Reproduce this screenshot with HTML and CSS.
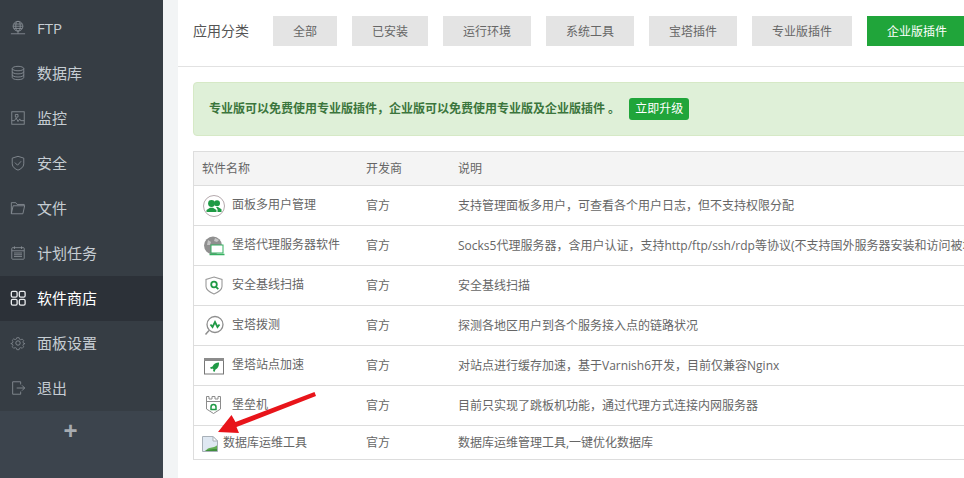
FILE: index.html
```html
<!DOCTYPE html>
<html lang="zh-CN">
<head>
<meta charset="utf-8">
<title>软件商店</title>
<link rel="stylesheet" href="styles.css">
</head>
<body>
<div class="page">
  <aside class="sidebar">
    <nav class="menu">
      <a class="menu-item"><svg class="mi" viewBox="0 0 18 18"><circle cx="9" cy="7" r="5.5"/><ellipse cx="9" cy="7" rx="2.500" ry="5.500"/><path d="M3.500 7h11M4.500 4.500h9M4.500 9.500h9M1 15.500h16M9 12.500v3"/></svg><span>FTP</span></a>
      <a class="menu-item"><svg class="mi" viewBox="0 0 18 18"><ellipse cx="9" cy="4" rx="6.500" ry="2.500"/><path d="M2.500 4v10c0 1.400 2.900 2.500 6.500 2.500s6.500-1.100 6.500-2.500V4M2.500 7.500C2.500 8.900 5.400 10 9 10s6.500-1.100 6.500-2.500M2.500 11c0 1.400 2.900 2.500 6.500 2.500s6.500-1.100 6.500-2.500"/></svg><span>数据库</span></a>
      <a class="menu-item"><svg class="mi" viewBox="0 0 18 18"><rect x="2" y="2" width="14" height="14"/><path d="M2 12h3l2-3 2 4 2-3 1 2h4M6 5h3v3H6z"/></svg><span>监控</span></a>
      <a class="menu-item"><svg class="mi" viewBox="0 0 18 18"><path d="M9 1.500l6.500 2v6.500c0 3.500-3.500 6-6.500 7-3-1-6.500-3.500-6.500-7V3.500z"/><path d="M5.500 8.500l3 3 4-4.500"/></svg><span>安全</span></a>
      <a class="menu-item"><svg class="mi" viewBox="0 0 18 18"><path d="M1.500 15.500V3h5l1.500 2h8v1.500M1.500 15.500h13l2-9H3.500z"/></svg><span>文件</span></a>
      <a class="menu-item"><svg class="mi" viewBox="0 0 18 18"><rect x="2" y="3" width="14" height="13" rx="1"/><path d="M2 6.500h14M5 1.500v3M13 1.500v3M4.500 9h9M4.500 11h9M4.500 13h9"/></svg><span>计划任务</span></a>
      <a class="menu-item active"><svg class="mi" viewBox="0 0 18 18"><rect x="1.500" y="1.500" width="6.500" height="6.500" rx="1.500"/><rect x="10.500" y="1.500" width="6.500" height="6.500" rx="1.500"/><rect x="1.500" y="10.500" width="6.500" height="6.500" rx="1.500"/><rect x="10.500" y="10.500" width="6.500" height="6.500" rx="1.500"/></svg><span>软件商店</span></a>
      <a class="menu-item"><svg class="mi" viewBox="0 0 18 18"><circle cx="9" cy="9" r="2.500"/><path d="M7.500 2h3l.5 2 1.800.8 1.800-1 2 2-1 1.800.8 1.800 2 .5v0l-2 .6-.8 1.800 1 1.800-2 2-1.800-1-1.800.8-.5 2h-3l-.5-2-1.800-.8-1.800 1-2-2 1-1.800-.8-1.800-2-.6v-.2l2-.5.8-1.800-1-1.800 2-2 1.800 1 1.800-.8z" transform="translate(1.300 1.300) scale(.85)"/></svg><span>面板设置</span></a>
      <a class="menu-item"><svg class="mi" viewBox="0 0 18 18"><path d="M12 5V2H3v14h9v-3M7.500 9h9M13.500 6l3 3-3 3"/></svg><span>退出</span></a>
    </nav>
    <div class="add">+</div>
  </aside>
  <main class="main">
    <div class="card">
      <div class="filter">
        <span class="filter-label">应用分类</span>
        <a class="tab">全部</a>
        <a class="tab">已安装</a>
        <a class="tab">运行环境</a>
        <a class="tab">系统工具</a>
        <a class="tab">宝塔插件</a>
        <a class="tab">专业版插件</a>
        <a class="tab on">企业版插件</a>
      </div>
      <div class="body">
        <div class="alert">
          <span>专业版可以免费使用专业版插件，企业版可以免费使用专业版及企业版插件 。</span>
          <a class="upgrade">立即升级</a>
        </div>
        <div class="table">
          <div class="row head"><div>软件名称</div><div>开发商</div><div>说明</div></div>
          <div class="row">
            <div class="name"><svg class="ico" viewBox="0 0 24 24"><circle cx="12" cy="12" r="10.500" fill="#fff" stroke="#b5a9ad"/><g fill="#1f9a45"><circle cx="9.500" cy="9.500" r="3.400"/><path d="M4.500 18v-2l3.500-2.200h3L14.500 16v2z"/><circle cx="15" cy="9.300" r="3"/><path d="M14 13h2l3.500 2.300V18h-4v-2.700z"/></g></svg><span>面板多用户管理</span></div>
            <div>官方</div><div>支持管理面板多用户，可查看各个用户日志，但不支持权限分配</div>
          </div>
          <div class="row">
            <div class="name"><svg class="ico" viewBox="0 0 24 24"><circle cx="11" cy="11.500" r="9" fill="#8f8f8f"/><path d="M6 6l3 2-1 3-3 0zM13 4l4 2-2 2-3-1z" fill="#c4c4c4"/><rect x="9" y="11" width="12" height="8" fill="#fff" stroke="#35b060"/><path d="M7.500 20.500h15" stroke="#35b060" stroke-width="1.500"/></svg><span>堡塔代理服务器软件</span></div>
            <div>官方</div><div>Socks5代理服务器，含用户认证，支持http/ftp/ssh/rdp等协议(不支持国外服务器安装和访问被墙网站)</div>
          </div>
          <div class="row">
            <div class="name"><svg class="ico" viewBox="0 0 24 24"><path d="M11 3.500l8 2.500v7c0 3.500-4.500 6-8 7.500-3.500-1.500-8-4-8-7.500V6z" fill="#fff" stroke="#9a9a9a" stroke-width="1.100" transform="translate(1 -.5)"/><circle cx="12" cy="10.500" r="2.800" fill="none" stroke="#1f9a45" stroke-width="1.800"/><path d="M14 12.800l2.300 2.300" stroke="#1f9a45" stroke-width="1.800"/></svg><span>安全基线扫描</span></div>
            <div>官方</div><div>安全基线扫描</div>
          </div>
          <div class="row">
            <div class="name"><svg class="ico" viewBox="0 0 24 24"><circle cx="13" cy="10.500" r="8" fill="#fff" stroke="#8e8e8e" stroke-width="1.300"/><path d="M7 16.500L3.500 20.500" stroke="#8e8e8e" stroke-width="1.500"/><path d="M8.500 10.500l2 2.500 2.500-5 2.500 5 2-2.500" fill="none" stroke="#1f9a45" stroke-width="1.800"/></svg><span>宝塔拨测</span></div>
            <div>官方</div><div>探测各地区用户到各个服务接入点的链路状况</div>
          </div>
          <div class="row">
            <div class="name"><svg class="ico" viewBox="0 0 24 24"><rect x="2.500" y="4.500" width="19" height="15.500" fill="#fff" stroke="#777"/><rect x="2" y="4" width="20" height="3" fill="#8c8c8c"/><path d="M17 8.500c-3 0-5.500 1.500-6.500 4l-2.500 1 1 1.500 1.500-.5 1 1-.5 1.500 1.500 1 1-2.500c2.500-1 3.500-3.500 3.500-6z" fill="#1f9a45"/></svg><span>堡塔站点加速</span></div>
            <div>官方</div><div>对站点进行缓存加速，基于Varnish6开发，目前仅兼容Nginx</div>
          </div>
          <div class="row">
            <div class="name"><svg class="ico" viewBox="0 0 24 24"><path d="M4.500 2.500h2.500V5h3V2.500h3V5h3V2.500h2.500V15l-7 4.500-7-4.500z" fill="#fff" stroke="#8c8c8c"/><path d="M4.500 7.500h14" stroke="#8c8c8c"/><path d="M9 15.500v-2.500a2.500 2.500 0 0 1 5 0v2.500z" fill="none" stroke="#1f9a45" stroke-width="1.500"/></svg><span>堡垒机</span></div>
            <div>官方</div><div>目前只实现了跳板机功能，通过代理方式连接内网服务器</div>
          </div>
          <div class="row last">
            <div class="name broken"><svg class="broken-ico" viewBox="0 0 16 16"><path d="M.5.500h10.500l4.500 4.500v10.500H.500z" fill="#dfe8f2" stroke="#a8b0b8"/><path d="M11 .500v4.500h4.500z" fill="#fff" stroke="#a8b0b8"/><path d="M3 15l3-2.500c2-1 3.500-.8 5-1.200 1.500-.4 3-1 4-2v5.700z" fill="#63ad55"/><path d="M3 15c3-1.500 7-2 12-2v2z" fill="#3f8f3c"/></svg><span>数据库运维工具</span></div>
            <div>官方</div><div>数据库运维管理工具,一键优化数据库</div>
          </div>
        </div>
      </div>
    </div>
  </main>
  <svg class="arrow" viewBox="0 0 964 478"><path d="M316 396l-1.500-4-79 30-4-7L218 432l21 1-2.500-6z" fill="#e8141a"/></svg>
</div>
</body>
</html>
```
FILE: styles.css
```css
* { box-sizing: border-box; }
html, body { margin: 0; height: 100%; overflow: hidden; }
body {
  font-family: "Open Sans", "Noto Sans CJK SC", sans-serif;
  font-size: 12px;
  line-height: 16px;
  color: #666;
  background: #f2f4f5;
}
.page { position: relative; display: flex; width: 964px; height: 478px; overflow: hidden; }
.sidebar { flex: 0 0 163px; display: flex; flex-direction: column; background: #3c444d; }
.menu { padding-top: 6px; background: #363d44; }
.menu-item {
  display: flex; align-items: center; gap: 11px; height: 45px; padding: 0 0 1px 10px;
  font-size: 15px; line-height: 20px; color: #c6cdd3;
}
.menu-item.active { background: #2c3138; color: #fff; }
.mi { flex: none; width: 16px; height: 16px; fill: none; stroke: #868d94; stroke-width: 1; }
.active .mi { stroke: #e8eaec; stroke-width: 1.500; }
.add { text-align: center; font-family: "Liberation Sans", sans-serif; font-size: 24px; line-height: 40px; color: #a7acb1; font-weight: 700; margin-left: -22px; }
.main { flex: 1; min-width: 0; padding-left: 15px; }
.card { width: 800px; height: 478px; background: #fff; }
.filter {
  display: flex; align-items: center; gap: 15px; height: 67px; padding: 0 0 5px 15px;
  border-bottom: 1px solid #e2e2e2;
}
.filter-label { font-size: 14px; color: #555; margin-right: 9px; }
.tab { height: 30px; line-height: 32px; padding: 0 20px; background: #e4e4e4; white-space: nowrap; }
.tab.on { background: #20a53a; color: #fff; flex: none; }
.body { padding: 15px 0 0 15px; }
.alert {
  display: flex; align-items: center; height: 54px; width: 790px; padding-left: 15px;
  background: #dff0d8; border: 1px solid #d6e9c6; border-radius: 4px;
  color: #3c763d; font-weight: 700; white-space: nowrap;
}
.upgrade { margin-left: 9px; height: 22px; line-height: 22px; padding: 0 6px; border-radius: 3px; background: #20a53a; color: #fff; font-weight: 400; }
.table { margin-top: 15px; width: 790px; border: 1px solid #ddd; }
.row {
  display: grid; grid-template-columns: 172px 92px 1fr; align-items: center; height: 40px;
  border-bottom: 1px solid #ddd; white-space: nowrap; overflow: hidden;
}
.row > div:first-child { padding-left: 8px; }
.head { height: 34px; background: #f4f4f4; }
.row.last { height: 33px; border-bottom: 0; }
.name { display: flex; align-items: center; gap: 6px; }
.name span { margin-top: -2px; }
.ico { flex: none; width: 24px; height: 24px; }
.broken { gap: 5px; }
.broken span { margin-top: 0; }
.broken-ico { flex: none; width: 16px; height: 16px; margin-top: 2px; }
.arrow { position: absolute; left: 0; top: 0; width: 964px; height: 478px; pointer-events: none; }
```
